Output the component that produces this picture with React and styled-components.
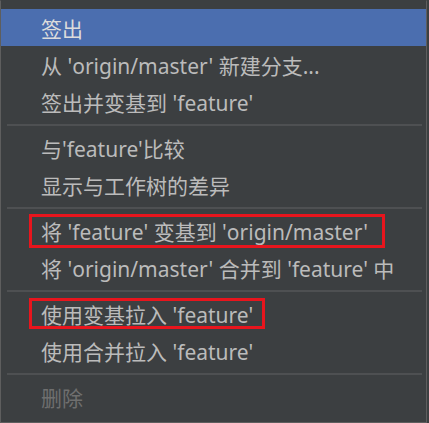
import React from "react";
import styled, { createGlobalStyle } from "styled-components";

const Global = createGlobalStyle`
  html, body { margin: 0; padding: 0; background: #3c3f41; }
  * { box-sizing: border-box; }
`;

const Menu = styled.div`
  width: 427px;
  height: 423px;
  background: #3c3f41;
  border: 1px solid #5e5e5e;
  border-top-color: #3c3f41;
  padding: 8px 0 6px;
  display: flex;
  flex-direction: column;
  font-family: "Noto Sans", "Noto Sans CJK SC", sans-serif;
  font-size: 21px;
`;

const Item = styled.div`
  position: relative;
  height: 37px;
  flex: none;
  display: flex;
  align-items: center;
  padding-left: 40px;
  white-space: nowrap;
  color: ${(p) => (p.$disabled ? "#6f6f6f" : p.$selected ? "#dcdcdc" : "#bbbbbb")};
  background: ${(p) => (p.$selected ? "#4b6eaf" : "transparent")};
`;

const Separator = styled.div`
  height: 9px;
  flex: none;
  display: flex;
  align-items: center;
  padding: 0 4px 0 6px;
  &::before {
    content: "";
    flex: 1;
    height: 2px;
    background: #4e5052;
  }
`;

const Mark = styled.span`
  position: absolute;
  left: 28px;
  top: ${(p) => p.$top}px;
  width: ${(p) => p.$width}px;
  height: ${(p) => p.$height}px;
  border: 3px solid #e8151d;
  pointer-events: none;
`;

const entries = [
  { label: "签出", selected: true },
  { label: "从 'origin/master' 新建分支..." },
  { label: "签出并变基到 'feature'" },
  { sep: true },
  { label: "与'feature'比较" },
  { label: "显示与工作树的差异" },
  { sep: true },
  { label: "将 'feature' 变基到 'origin/master'", mark: { top: 2, width: 356, height: 34 } },
  { label: "将 'origin/master' 合并到 'feature' 中" },
  { sep: true },
  { label: "使用变基拉入 'feature'", mark: { top: 3, width: 236, height: 31 } },
  { label: "使用合并拉入 'feature'" },
  { sep: true },
  { label: "删除", disabled: true },
];

export default function App() {
  return (
    <>
      <Global />
      <Menu>
        {entries.map((e, i) =>
          e.sep ? (
            <Separator key={i} />
          ) : (
            <Item key={i} $selected={e.selected} $disabled={e.disabled}>
              {e.label}
              {e.mark && <Mark $top={e.mark.top} $width={e.mark.width} $height={e.mark.height} />}
            </Item>
          )
        )}
      </Menu>
    </>
  );
}
